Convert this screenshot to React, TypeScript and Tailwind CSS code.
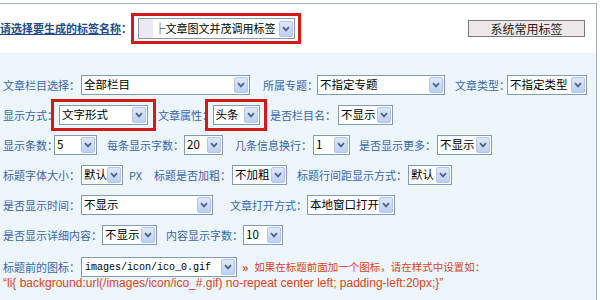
import type { ReactNode } from "react";

function Arrow() {
  return (
    <span className="ml-auto mr-[1px] flex h-[16px] w-[14px] shrink-0 items-center justify-center rounded-[2px] border border-[#b4c6ee] bg-gradient-to-b from-[#dfe8fb] to-[#bccff6]">
      <svg width="8" height="6" viewBox="0 0 8 6">
        <path d="M1 1.2 L4 4.4 L7 1.2" fill="none" stroke="#4d6185" strokeWidth="1.7" />
      </svg>
    </span>
  );
}

function Sel({ w, text, mono }: { w: string; text: string; mono?: boolean }) {
  return (
    <div className={`flex h-[20px] shrink-0 items-center border border-[#7f9db9] bg-white ${w}`}>
      <span
        className={
          mono
            ? "min-w-0 overflow-hidden whitespace-nowrap pl-[3px] font-['Liberation_Mono',monospace] text-[10px] text-black"
            : "min-w-0 overflow-hidden whitespace-nowrap pl-[2px] text-[11.5px] text-black"
        }
      >
        {text}
      </span>
      <Arrow />
    </div>
  );
}

function Label({ w, children }: { w: string; children: ReactNode }) {
  return (
    <span className={`shrink-0 whitespace-nowrap text-[11px] text-[#3868aa] ${w}`}>{children}</span>
  );
}

function RedBox({ w, children }: { w: string; children: ReactNode }) {
  return (
    <div className={`flex h-[32px] shrink-0 items-center justify-center border-[3px] border-[#d21a1a] ${w}`}>
      {children}
    </div>
  );
}

export default function App() {
  return (
    <div className="h-[300px] w-[600px] overflow-hidden bg-white font-['Noto_Sans_CJK_SC',sans-serif]">
      <div className="mt-[3px] w-[597px] border-r border-t border-[#9fb1c4]">
        <div className="flex h-[49px] items-center bg-white">
          <span className="flex w-[131px] shrink-0 whitespace-nowrap text-[11px] font-bold text-[#1d4c8c]">
            <span className="underline">请选择要生成的标签名称</span>
            <span>：</span>
          </span>
          <div className="flex h-[31px] w-[170px] shrink-0 items-center justify-center border-[3px] border-[#d21a1a] bg-white">
            <div className="flex h-[21px] w-[157px] items-center border border-[#7f9db9] bg-white">
              <span className="h-full w-[14px] shrink-0 bg-[#ebe9f4]" />
              <span className="ml-[2px] min-w-0 overflow-hidden whitespace-nowrap text-[11px] text-black">
                ├文章图文并茂调用标签
              </span>
              <Arrow />
            </div>
          </div>
          <button className="ml-[167px] flex h-[17px] w-[117px] items-center justify-center border border-[#7a7a7a] bg-[#ece9e8] text-[12px] text-[#222]">
            系统常用标签
          </button>
        </div>

        <div className="h-[247px] bg-[#edf5fd] pt-[17px]">
          <div className="flex h-[30px] items-center pl-[3px]">
            <Label w="w-[78px]">文章栏目选择：</Label>
            <Sel w="w-[169px]" text="全部栏目" />
            <Label w="ml-[13px] w-[54px]">所属专题：</Label>
            <Sel w="w-[128px]" text="不指定专题" />
            <Label w="ml-[10px] w-[52px]">文章类型：</Label>
            <Sel w="w-[80px]" text="不指定类型" />
          </div>

          <div className="flex h-[30px] items-center pl-[3px]">
            <Label w="w-[48px]">显示方式：</Label>
            <RedBox w="w-[105px]">
              <Sel w="w-[89px]" text="文字形式" />
            </RedBox>
            <Label w="ml-[2px] w-[47px]">文章属性：</Label>
            <RedBox w="w-[62px]">
              <Sel w="w-[47px]" text="头条" />
            </RedBox>
            <Label w="ml-[3px] w-[68px]">是否栏目名：</Label>
            <Sel w="w-[55px]" text="不显示" />
          </div>

          <div className="flex h-[30px] items-center pl-[3px]">
            <Label w="w-[51px]">显示条数：</Label>
            <Sel w="w-[43px]" text="5" />
            <Label w="ml-[10px] w-[77px]">每条显示字数：</Label>
            <Sel w="w-[39px]" text="20" />
            <Label w="ml-[12px] w-[78px]">几条信息换行：</Label>
            <Sel w="w-[37px]" text="1" />
            <Label w="ml-[9px] w-[78px]">是否显示更多：</Label>
            <Sel w="w-[55px]" text="不显示" />
          </div>

          <div className="flex h-[30px] items-center pl-[3px]">
            <Label w="w-[78px]">标题字体大小：</Label>
            <Sel w="w-[42px]" text="默认" />
            <Label w="ml-[6px] w-[25px]">PX</Label>
            <Label w="w-[78px]">标题是否加粗：</Label>
            <Sel w="w-[55px]" text="不加粗" />
            <Label w="ml-[10px] w-[111px]">标题行间距显示方式：</Label>
            <Sel w="w-[44px]" text="默认" />
          </div>

          <div className="flex h-[30px] items-center pl-[3px]">
            <Label w="w-[78px]">是否显示时间：</Label>
            <Sel w="w-[132px]" text="不显示" />
            <Label w="ml-[17px] w-[77px]">文章打开方式：</Label>
            <Sel w="w-[88px]" text="本地窗口打开" />
          </div>

          <div className="flex h-[30px] items-center pl-[3px]">
            <Label w="w-[99px]">是否显示详细内容：</Label>
            <Sel w="w-[55px]" text="不显示" />
            <Label w="ml-[9px] w-[77px]">内容显示字数：</Label>
            <Sel w="w-[40px]" text="10" />
          </div>

          <div className="mt-[7px] flex h-[20px] items-center pl-[3px]">
            <Label w="w-[78px]">标题前的图标：</Label>
            <Sel w="w-[156px]" text="images/icon/ico_0.gif" mono />
            <span className="ml-[5px] text-[12px] font-bold leading-none text-[#d9461f]">»</span>
            <span className="ml-[6px] whitespace-nowrap text-[10.5px] text-[#d9461f]">
              如果在标题前面加一个图标，请在样式中设置如：
            </span>
          </div>
          <div className="whitespace-nowrap pl-[3px] font-['Liberation_Sans',sans-serif] text-[12px] leading-[12px] text-[#d9461f]">
            “li{"{"} background:url(/images/icon/ico_#.gif) no-repeat center left; padding-left:20px;{"}"}”
          </div>
        </div>
      </div>
    </div>
  );
}
